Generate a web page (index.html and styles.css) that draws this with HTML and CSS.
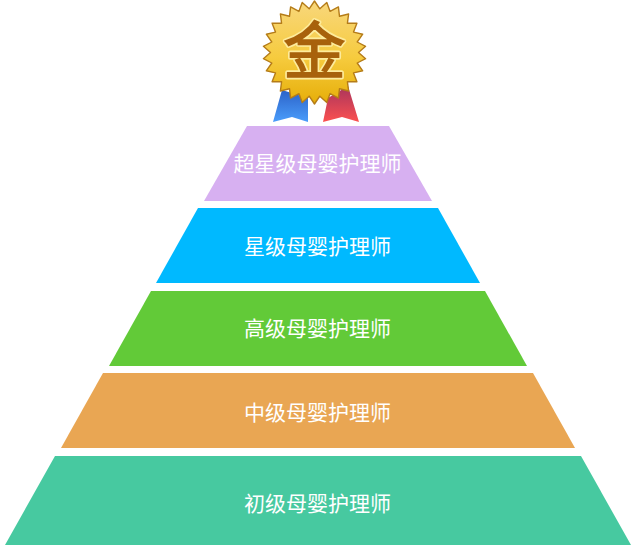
FILE: index.html
```html
<!DOCTYPE html>
<html lang="zh-CN">
<head>
    <meta charset="UTF-8">
    <meta name="viewport" content="width=device-width, initial-scale=1.0">
    <title>母婴护理师等级</title>
    <link rel="stylesheet" href="styles.css">
</head>
<body>
<div class="pyramid">
    <svg class="medal" viewBox="260 0 110 126" width="110" height="126">
        <defs>
            <linearGradient id="blueRibbon" x1="0" y1="0" x2="0" y2="1">
                <stop offset="0" stop-color="#2c62c8"/>
                <stop offset="1" stop-color="#4a9dfb"/>
            </linearGradient>
            <linearGradient id="redRibbon" x1="0" y1="0" x2="0" y2="1">
                <stop offset="0" stop-color="#a8345c"/>
                <stop offset="1" stop-color="#fb5050"/>
            </linearGradient>
            <linearGradient id="gold" x1="0" y1="0" x2="0" y2="1">
                <stop offset="0" stop-color="#f8d77c"/>
                <stop offset="0.55" stop-color="#f6cb3e"/>
                <stop offset="1" stop-color="#e6ae08"/>
            </linearGradient>
        </defs>
        <polygon points="282,90 273,122 292,117 308,122 308,98" fill="url(#blueRibbon)"/>
        <polygon points="328,98 323,122 342,117 359,122 348,86" fill="url(#redRibbon)"/>
        <polygon transform="translate(314.5 52.5)" fill="url(#gold)" stroke="#b57c18" stroke-width="1.4" stroke-linejoin="round"
            points="0,-51.5 5.3,-43.7 12.3,-50 15.6,-41.1 23.9,-45.6 25,-36.2 34.1,-38.5 32.9,-29.2 42.4,-29.3 39,-20.4 48.2,-18.3 42.7,-10.5 51.1,-6.2 44,0 51.1,6.2 42.7,10.5 48.2,18.3 39,20.4 42.4,29.3 32.9,29.2 34.1,38.5 25,36.2 23.9,45.6 15.6,41.1 12.3,50 5.3,43.7 0,51.5 -5.3,43.7 -12.3,50 -15.6,41.1 -23.9,45.6 -25,36.2 -34.1,38.5 -32.9,29.2 -42.4,29.3 -39,20.4 -48.2,18.3 -42.7,10.5 -51.1,6.2 -44,0 -51.1,-6.2 -42.7,-10.5 -48.2,-18.3 -39,-20.4 -42.4,-29.3 -32.9,-29.2 -34.1,-38.5 -25,-36.2 -23.9,-45.6 -15.6,-41.1 -12.3,-50 -5.3,-43.7"/>
        <text class="medal-char medal-char-glow" x="314.5" y="73.5">金</text>
        <text class="medal-char" x="314.5" y="73.5">金</text>
    </svg>

    <div class="tier tier-super">超星级母婴护理师</div>
    <div class="tier tier-star">星级母婴护理师</div>
    <div class="tier tier-high">高级母婴护理师</div>
    <div class="tier tier-mid">中级母婴护理师</div>
    <div class="tier tier-base">初级母婴护理师</div>
</div>
</body>
</html>
```

FILE: styles.css
```css
html, body {
    margin: 0;
    background: #fff;
}

.pyramid {
    display: flex;
    flex-direction: column;
    align-items: center;
    gap: 7px;
    width: 636px;
    font-family: "Noto Sans CJK SC", "Noto Sans", sans-serif;
}

.medal {
    display: block;
    margin: 0 6px -7px 0;
}

.medal-char {
    font-size: 62px;
    font-weight: 400;
    text-anchor: middle;
    fill: #a8620c;
    stroke: #a8620c;
    stroke-width: 1.6px;
}

.medal-char-glow {
    fill: #fdeb9c;
    stroke: #fdeb9c;
    stroke-width: 5px;
    stroke-linejoin: round;
}

.tier {
    --inset: 42px;
    box-sizing: border-box;
    display: flex;
    justify-content: center;
    align-items: center;
    height: 75px;
    padding-right: 1px;
    color: #fff;
    font-size: 21px;
    line-height: 1;
    clip-path: polygon(var(--inset) 0, calc(100% - var(--inset)) 0, 100% 100%, 0 100%);
}

.tier-super {
    --inset: 43px;
    width: 228px;
    padding-bottom: 2px;
    background: #d7b0f1;
}

.tier-star {
    width: 324px;
    background: #00b9ff;
}

.tier-high {
    width: 418px;
    margin-top: 1px;
    padding-bottom: 2px;
    background: #62ca38;
}

.tier-mid {
    width: 514px;
    padding-top: 2px;
    background: #e9a653;
}

.tier-base {
    --inset: 50px;
    width: 626px;
    height: 89px;
    margin-top: 1px;
    padding-top: 4px;
    background: #47c9a0;
}
```
